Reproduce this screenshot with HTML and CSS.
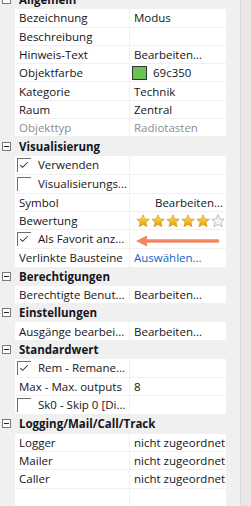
FILE: index.html
```html
<!DOCTYPE html>
<html>
<head>
  <title>Eigenschaften</title>
  <link rel="stylesheet" href="styles.css">
</head>
<body>
  <svg class="defs" width="0" height="0">
    <defs>
      <linearGradient id="gold" x1="0" y1="0" x2="0" y2="1">
        <stop offset="0" stop-color="#fde27a"/>
        <stop offset="0.5" stop-color="#f6bd24"/>
        <stop offset="1" stop-color="#e39a0c"/>
      </linearGradient>
    </defs>
  </svg>
  <div class="panel">
    <div class="grid">
      <div class="cat"><span class="toggle"></span>Allgemein</div>
      <div class="row"><div class="name">Bezeichnung</div><div class="value">Modus</div></div>
      <div class="row"><div class="name">Beschreibung</div><div class="value"></div></div>
      <div class="row"><div class="name">Hinweis-Text</div><div class="value">Bearbeiten...</div></div>
      <div class="row"><div class="name">Objektfarbe</div><div class="value"><span class="swatch"></span>69c350</div></div>
      <div class="row"><div class="name">Kategorie</div><div class="value">Technik</div></div>
      <div class="row"><div class="name">Raum</div><div class="value">Zentral</div></div>
      <div class="row disabled"><div class="name">Objekttyp</div><div class="value">Radiotasten</div></div>

      <div class="cat"><span class="toggle"></span>Visualisierung</div>
      <div class="row"><div class="name check"><span class="box checked"><svg viewBox="0 0 14 14"><polyline points="2.5,6.5 5,9 10.5,3.5"/></svg></span>Verwenden</div><div class="value"></div></div>
      <div class="row"><div class="name check"><span class="box"></span>Visualisierungs...</div><div class="value"></div></div>
      <div class="row"><div class="name">Symbol</div><div class="value right">Bearbeiten...</div></div>
      <div class="row"><div class="name">Bewertung</div>
        <div class="value stars">
          <svg class="star" viewBox="0 0 14 14"><path d="M7 .8l1.9 4.1 4.4.4-3.3 3 1 4.4L7 10.4l-3.9 2.3 1-4.4-3.3-3 4.4-.4z"/></svg>
          <svg class="star" viewBox="0 0 14 14"><path d="M7 .8l1.9 4.1 4.4.4-3.3 3 1 4.4L7 10.4l-3.9 2.3 1-4.4-3.3-3 4.4-.4z"/></svg>
          <svg class="star" viewBox="0 0 14 14"><path d="M7 .8l1.9 4.1 4.4.4-3.3 3 1 4.4L7 10.4l-3.9 2.3 1-4.4-3.3-3 4.4-.4z"/></svg>
          <svg class="star" viewBox="0 0 14 14"><path d="M7 .8l1.9 4.1 4.4.4-3.3 3 1 4.4L7 10.4l-3.9 2.3 1-4.4-3.3-3 4.4-.4z"/></svg>
          <svg class="star" viewBox="0 0 14 14"><path d="M7 .8l1.9 4.1 4.4.4-3.3 3 1 4.4L7 10.4l-3.9 2.3 1-4.4-3.3-3 4.4-.4z"/></svg>
          <svg class="star off" viewBox="0 0 14 14"><path d="M7 .8l1.9 4.1 4.4.4-3.3 3 1 4.4L7 10.4l-3.9 2.3 1-4.4-3.3-3 4.4-.4z"/></svg>
        </div>
      </div>
      <div class="row marked"><div class="name check"><span class="box checked"><svg viewBox="0 0 14 14"><polyline points="2.5,6.5 5,9 10.5,3.5"/></svg></span>Als Favorit anz...</div><div class="value"></div>
        <svg class="arrow" viewBox="0 0 84 12"><line x1="9" y1="6" x2="83" y2="6"/><polygon points="0,6 11,0.5 11,11.5"/></svg>
      </div>
      <div class="row"><div class="name">Verlinkte Bausteine</div><div class="value link">Auswählen...</div></div>

      <div class="cat"><span class="toggle"></span>Berechtigungen</div>
      <div class="row"><div class="name">Berechtigte Benut...</div><div class="value">Bearbeiten...</div></div>

      <div class="cat"><span class="toggle"></span>Einstellungen</div>
      <div class="row"><div class="name">Ausgänge bearbei...</div><div class="value">Bearbeiten...</div></div>

      <div class="cat"><span class="toggle"></span>Standardwert</div>
      <div class="row"><div class="name check"><span class="box checked"><svg viewBox="0 0 14 14"><polyline points="2.5,6.5 5,9 10.5,3.5"/></svg></span>Rem - Remane...</div><div class="value"></div></div>
      <div class="row"><div class="name">Max - Max. outputs</div><div class="value">8</div></div>
      <div class="row"><div class="name check"><span class="box"></span>Sk0 - Skip 0 [Di...</div><div class="value"></div></div>

      <div class="cat"><span class="toggle"></span>Logging/Mail/Call/Track</div>
      <div class="row"><div class="name">Logger</div><div class="value">nicht zugeordnet</div></div>
      <div class="row"><div class="name">Mailer</div><div class="value">nicht zugeordnet</div></div>
      <div class="row"><div class="name">Caller</div><div class="value">nicht zugeordnet</div></div>
      <div class="row"><div class="name"></div><div class="value"></div></div>
    </div>
    <div class="scroll"></div>
  </div>
</body>
</html>
```

FILE: styles.css
```css
body {
  margin: 0;
  background-color: #f0f0f0;
  font-family: "Open Sans", "Noto Sans", sans-serif;
  font-size: 11.5px;
  color: #151520;
  overflow: hidden;
}

.defs {
  position: absolute;
}

.panel {
  display: flex;
  height: 506px;
}

.grid {
  width: 240px;
  margin-top: -9px;
  display: flex;
  flex-direction: column;
  gap: 1px;
}

.cat {
  height: 18px;
  display: flex;
  align-items: center;
  font-weight: bold;
  white-space: nowrap;
}

.toggle {
  width: 7px;
  height: 7px;
  border: 1px solid #7a7a7a;
  margin: 0 8px 0 2px;
  position: relative;
  background-color: white;
}

.toggle::after {
  content: "";
  position: absolute;
  left: 1px;
  right: 1px;
  top: 3px;
  height: 1px;
  background-color: #222;
}

.row {
  position: relative;
  height: 18px;
  margin-left: 15px;
  width: 211px;
  display: grid;
  grid-template-columns: 114px 96px;
  column-gap: 1px;
}

.name,
.value {
  background-color: white;
  display: flex;
  align-items: center;
  padding-left: 4px;
  white-space: nowrap;
  overflow: hidden;
}

.name.check {
  padding-left: 2px;
  align-items: flex-start;
  line-height: 18px;
}

.box {
  width: 13px;
  height: 13px;
  margin-top: 2px;
  margin-right: 7px;
  border-top: 1px solid #6d6d6d;
  border-left: 1px solid #6d6d6d;
  flex: none;
}

.box svg {
  width: 13px;
  height: 13px;
  display: block;
}

.box polyline {
  fill: none;
  stroke: #333;
  stroke-width: 1.1;
}

.disabled .name,
.disabled .value {
  color: #8c8c8c;
}

.right {
  justify-content: flex-end;
  padding-right: 3px;
}

.swatch {
  width: 13px;
  height: 12px;
  border: 1px solid #333;
  background-color: #69c350;
  margin: 0 6px 0 -2px;
}

.link {
  color: #0a66cc;
}

.stars {
  gap: 1px;
  padding-left: 6px;
  padding-top: 1px;
}

.star {
  width: 14px;
  height: 14px;
  flex: none;
}

.star path {
  fill: url(#gold);
  stroke: #d08f0a;
  stroke-width: 0.6;
}

.star.off path {
  fill: #f4f4f4;
  stroke: #9a9a9a;
}

.arrow {
  position: absolute;
  left: 121px;
  top: 5px;
  width: 84px;
  height: 12px;
}

.arrow line {
  stroke: #f08763;
  stroke-width: 3.5;
}

.arrow polygon {
  fill: #f08763;
}

.scroll {
  width: 10px;
  border-left: 1px solid #dcdcdc;
  background-color: #e8e8e8;
}
```
